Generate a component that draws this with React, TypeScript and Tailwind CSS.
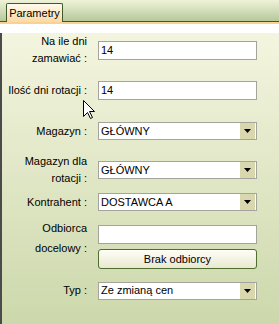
import React from "react";

const TextBox = ({ value = "" }: { value?: string }) => (
  <div className="h-[19px] w-[159px] border border-[#a4a49c] bg-white pl-[2px] flex items-center text-[11px] text-black">
    {value}
  </div>
);

const Combo = ({ value }: { value: string }) => (
  <div className="h-[18px] w-[159px] border border-[#a4a49c] bg-white pl-[2px] pr-px flex items-center justify-between text-[11px] text-black">
    <span>{value}</span>
    <div className="h-[16px] w-[15px] bg-[#d8d7ad] flex items-center justify-center">
      <svg width="7" height="4" viewBox="0 0 7 4">
        <path d="M0 0H7L3.5 4Z" fill="#000" />
      </svg>
    </div>
  </div>
);

const Cursor = () => (
  <svg
    className="absolute left-[83px] top-[100px]"
    width="12"
    height="19"
    viewBox="0 0 12 19"
  >
    <path
      d="M0.5 0.5V16.5L4.5 12.5L7.5 18.5L9.5 17.5L6.5 11.5H11.5Z"
      fill="#fff"
      stroke="#000"
      strokeWidth="1"
    />
  </svg>
);

export default function App() {
  return (
    <div className="relative w-[279px] h-[324px] overflow-hidden font-['Liberation_Sans',Arial,sans-serif] text-[11px] text-black">
      {/* tab strip */}
      <div className="h-[22px] flex items-end border-b border-[#3e5a2c] bg-linear-to-b from-[#eff3d9] to-[#b7c89b]">
        <div className="ml-[6px] -mb-px h-[19px] w-[57px] rounded-t-[2px] border border-b-0 border-[#3e5a2c] bg-linear-to-b from-[#fffbee] to-[#fcd8a3] flex items-center justify-center">
          Parametry
        </div>
      </div>
      <div className="h-[2px] bg-[#fad290]" />

      {/* form */}
      <div className="h-[300px] border-l-2 border-[#4b4b4b] bg-linear-to-b from-[#f4f5df] to-[#cbd7aa]">
        <div className="flex items-center h-[34px] mt-[9px]">
          <div className="w-[85px] text-right leading-[17px]">
            Na ile dni
            <br />
            zamawiać :
          </div>
          <div className="ml-[11px]">
            <TextBox value="14" />
          </div>
        </div>

        <div className="flex items-center h-[19px] mt-[14px]">
          <div className="w-[85px] text-right">Ilość dni rotacji :</div>
          <div className="ml-[11px]">
            <TextBox value="14" />
          </div>
        </div>

        <div className="flex items-center h-[18px] mt-[22px]">
          <div className="w-[85px] text-right">Magazyn :</div>
          <div className="ml-[11px]">
            <Combo value="GŁÓWNY" />
          </div>
        </div>

        <div className="flex items-center h-[34px] mt-[13px]">
          <div className="w-[85px] text-right leading-[17px]">
            Magazyn dla
            <br />
            rotacji :
          </div>
          <div className="ml-[11px]">
            <Combo value="GŁÓWNY" />
          </div>
        </div>

        <div className="flex items-center h-[18px] mt-[6px]">
          <div className="w-[85px] text-right">Kontrahent :</div>
          <div className="ml-[11px]">
            <Combo value="DOSTAWCA A" />
          </div>
        </div>

        <div className="flex mt-[7px]">
          <div className="w-[85px] text-right leading-[20px]">
            Odbiorca
            <br />
            docelowy :
          </div>
          <div className="ml-[11px] pt-[7px] flex flex-col gap-[5px]">
            <TextBox />
            <div className="h-[20px] w-[159px] rounded-[3px] border border-[#4f6d2f] bg-linear-to-b from-[#fefef7] to-[#e9e8d0] flex items-center justify-center">
              Brak odbiorcy
            </div>
          </div>
        </div>

        <div className="flex items-center h-[19px] mt-[12px]">
          <div className="w-[85px] text-right">Typ :</div>
          <div className="ml-[11px]">
            <Combo value="Ze zmianą cen" />
          </div>
        </div>
      </div>

      <Cursor />
    </div>
  );
}
